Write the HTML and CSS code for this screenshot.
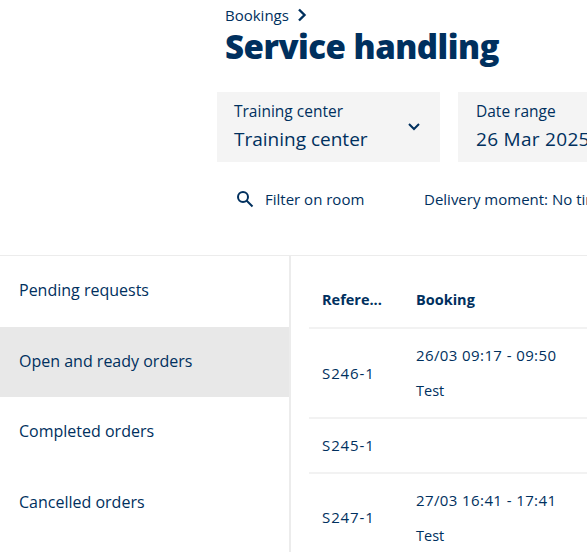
FILE: index.html
```html
<!DOCTYPE html>
<html>
<head>
  <title>Service handling</title>
  <link rel="stylesheet" href="styles.css">
</head>
<body>
  <div class="header">
    <div class="breadcrumb">
      <span>Bookings</span>
      <svg class="crumb-icon" width="12" height="14" viewBox="0 0 12 14"><path d="M3 1.5l5.5 5.5-5.5 5.5" fill="none" stroke="#00305e" stroke-width="2.4"/></svg>
    </div>
    <h1>Service handling</h1>
    <div class="selects">
      <div class="select">
        <div>
          <div class="select-label">Training center</div>
          <div class="select-value">Training center</div>
        </div>
        <svg class="select-icon" width="14" height="10" viewBox="0 0 14 10"><path d="M2 2l5 5 5-5" fill="none" stroke="#00305e" stroke-width="2"/></svg>
      </div>
      <div class="select select-date">
        <div>
          <div class="select-label">Date range</div>
          <div class="select-value date-value">26 Mar 2025</div>
        </div>
      </div>
    </div>
    <div class="filters">
      <div class="filter-room">
        <svg width="18" height="18" viewBox="0 0 18 18"><circle cx="7" cy="7" r="5" fill="none" stroke="#00305e" stroke-width="2"/><path d="M10.5 10.5l6 6" stroke="#00305e" stroke-width="2"/></svg>
        <span>Filter on room</span>
      </div>
      <div class="filter-moment">Delivery moment: No time selected</div>
    </div>
  </div>
  <div class="main">
    <div class="sidebar">
      <div class="side-item">Pending requests</div>
      <div class="side-item active">Open and ready orders</div>
      <div class="side-item">Completed orders</div>
      <div class="side-item">Cancelled orders</div>
    </div>
    <div class="content">
      <div class="row row-head">
        <div class="col-ref">Refere...</div>
        <div class="col-booking">Booking</div>
      </div>
      <div class="row row-tall">
        <div class="col-ref ref-code">S246-1</div>
        <div class="col-booking">
          <div class="booking-time">26/03 09:17 - 09:50</div>
          <div class="booking-name">Test</div>
        </div>
      </div>
      <div class="row row-short">
        <div class="col-ref ref-code">S245-1</div>
        <div class="col-booking"></div>
      </div>
      <div class="row row-last">
        <div class="col-ref ref-code">S247-1</div>
        <div class="col-booking">
          <div class="booking-time">27/03 16:41 - 17:41</div>
          <div class="booking-name">Test</div>
        </div>
      </div>
    </div>
  </div>
</body>
</html>
```

FILE: styles.css
```css
html, body {
  height: 100%;
  overflow: hidden;
}
body {
  margin: 0;
  font-family: "Open Sans", sans-serif;
  color: #00305e;
  background-color: #fff;
}
.header {
  height: 256px;
  box-sizing: border-box;
  padding: 6px 0 0 217px;
  border-bottom: 1px solid #ececec;
}
.breadcrumb {
  display: flex;
  align-items: center;
  gap: 7px;
  height: 18px;
  padding-left: 8px;
  font-size: 15px;
}
h1 {
  margin: 2px 0 0 8px;
  height: 66px;
  font-size: 33px;
  line-height: 42px;
  font-weight: 800;
  letter-spacing: -0.5px;
  white-space: nowrap;
}
.selects {
  display: flex;
  gap: 18px;
  width: 500px;
}
.select {
  display: flex;
  flex: none;
  align-items: center;
  justify-content: space-between;
  box-sizing: border-box;
  width: 223px;
  height: 70px;
  padding: 0 19px 0 17px;
  background-color: #f4f4f4;
}
.select-date {
  width: 240px;
  padding-left: 18px;
}
.select-label {
  font-size: 15.5px;
  line-height: 22px;
  margin-top: -2px;
}
.select-value {
  font-size: 19px;
  line-height: 28px;
  margin-top: 3px;
}
.date-value {
  letter-spacing: 0.3px;
}
.filters {
  display: flex;
  align-items: center;
  width: 600px;
  height: 24px;
  margin-top: 25px;
  font-size: 15px;
  white-space: nowrap;
}
.filter-room {
  display: flex;
  align-items: center;
  gap: 11px;
  width: 207px;
  padding-left: 19px;
  box-sizing: border-box;
}
.main {
  display: flex;
  height: 296px;
}
.sidebar {
  flex: none;
  width: 289px;
  border-right: 2px solid #ececec;
}
.side-item {
  display: flex;
  align-items: center;
  box-sizing: border-box;
  height: 70.5px;
  padding: 0 0 2px 19px;
  font-size: 16px;
}
.active {
  background-color: #e8e8e8;
}
.content {
  flex: 1;
  padding-left: 18px;
  font-size: 14.5px;
}
.row {
  display: flex;
  align-items: center;
  border-bottom: 2px solid #f2f2f2;
}
.row-head {
  box-sizing: border-box;
  height: 73px;
  padding-top: 15px;
  font-weight: 700;
}
.row-tall {
  height: 88px;
}
.row-short {
  height: 53px;
}
.row-last {
  height: 87px;
  border-bottom: 0;
}
.col-ref {
  flex: none;
  width: 107px;
  padding-left: 13px;
  box-sizing: border-box;
}
.ref-code {
  padding-bottom: 2px;
  font-size: 15px;
  letter-spacing: 0.9px;
}
.row-tall .ref-code {
  padding-bottom: 0;
}
.booking-time {
  font-size: 15px;
  letter-spacing: 0.4px;
}
.booking-name {
  margin-top: 16px;
  margin-bottom: 1px;
}
```
